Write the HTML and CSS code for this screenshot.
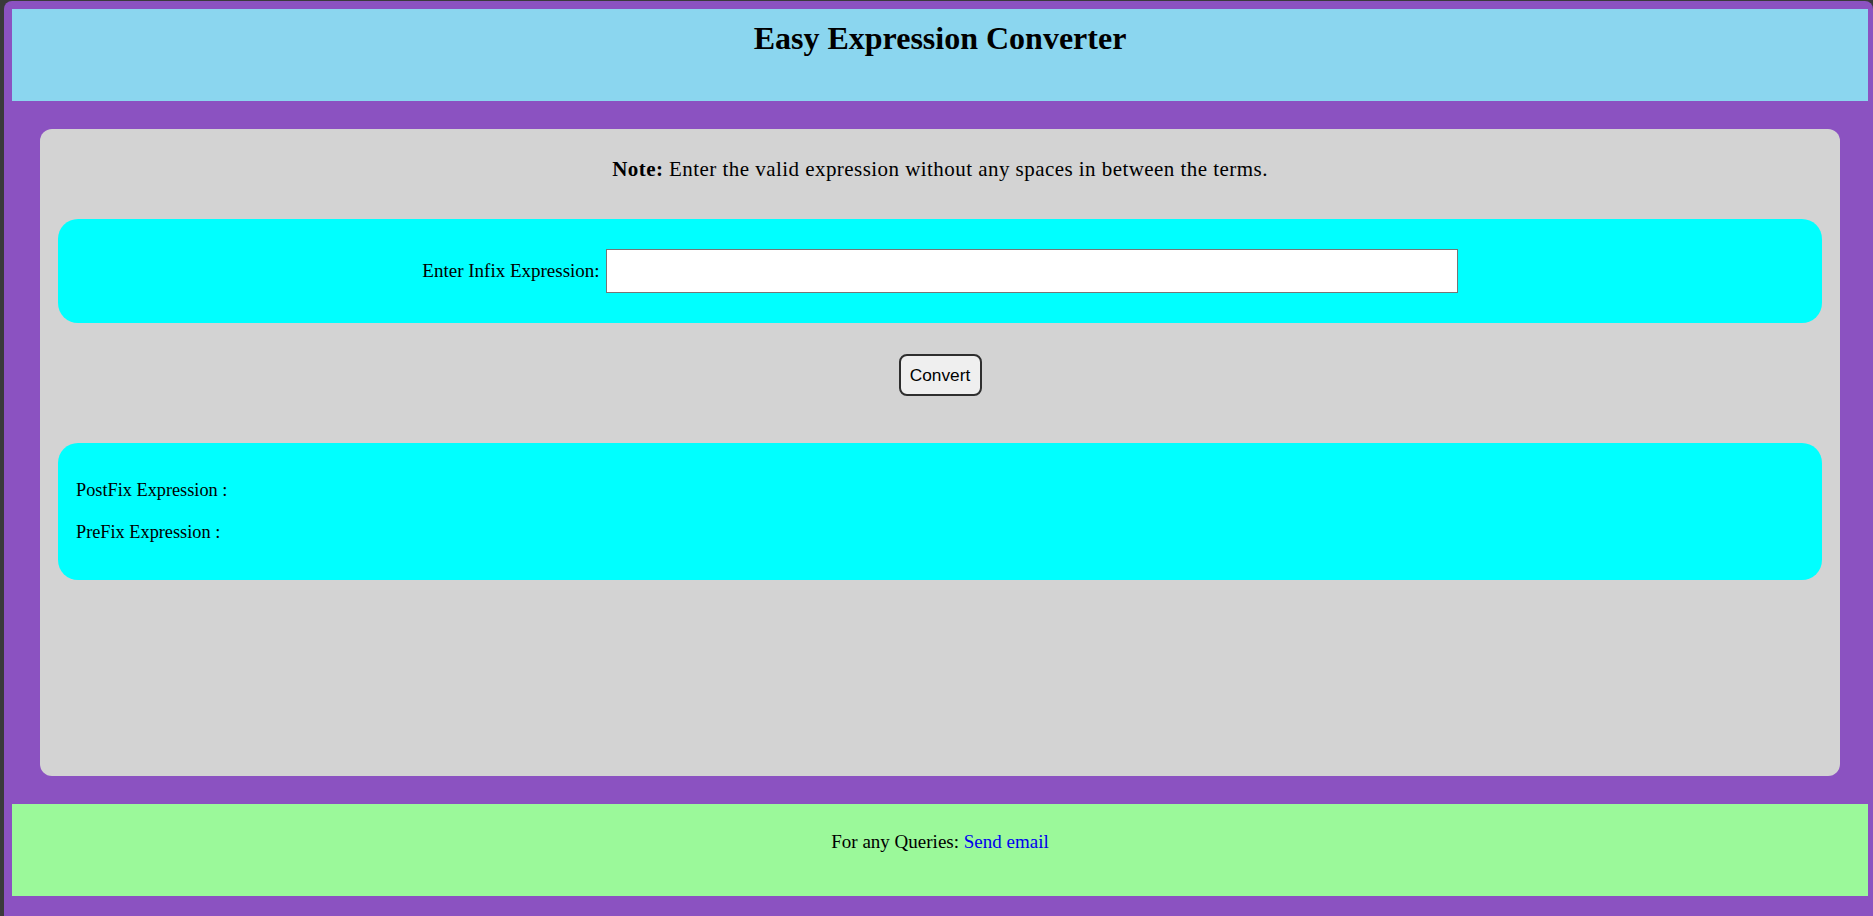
FILE: index.html
```html
<!DOCTYPE html>
<html lang="en">
<head>
<meta charset="utf-8">
<title>Easy Expression Converter</title>
<link rel="stylesheet" href="styles.css">
</head>
<body>
<div class="window">
  <header class="top">
    <h1 class="title">Easy Expression Converter</h1>
  </header>
  <main class="card">
    <p class="note"><b>Note:</b> Enter the valid expression without any spaces in between the terms.</p>
    <div class="input-box">
      <label class="infix-label" for="infix">Enter Infix Expression:</label>
      <input class="infix-input" id="infix" type="text">
    </div>
    <div class="btn-row">
      <button class="convert-btn" type="button">Convert</button>
    </div>
    <div class="result-box">
      <p class="result-line">PostFix Expression :</p>
      <p class="result-line">PreFix Expression :</p>
    </div>
  </main>
  <footer class="foot">For any Queries: <a class="mail-link" href="#">Send email</a></footer>
</div>
</body>
</html>
```
FILE: styles.css
```css
html, body {
  margin: 0;
  padding: 0;
}
body {
  background: #3a3a3b;
  font-family: "Liberation Serif", "Times New Roman", serif;
  color: #000;
  overflow: hidden;
}
.window {
  margin: 1px 0 0 4px;
  height: 915px;
  box-sizing: border-box;
  background: #8b52c1;
  border-radius: 8px 8px 0 0;
  padding: 8px 5px 20px 8px;
}
.top {
  height: 92px;
  box-sizing: border-box;
  background: #8bd6ef;
  padding-top: 11px;
  text-align: center;
}
.title {
  margin: 0;
  font-size: 32px;
  line-height: 37px;
  font-weight: bold;
}
.card {
  display: block;
  margin: 28px;
  height: 647px;
  box-sizing: border-box;
  background: #d3d3d3;
  border-radius: 12px;
  padding: 29px 18px 0;
}
.note {
  margin: 0;
  font-size: 21px;
  line-height: 23px;
  letter-spacing: 0.45px;
  text-align: center;
}
.input-box {
  margin-top: 38px;
  height: 104px;
  background: #00ffff;
  border-radius: 20px;
  display: flex;
  align-items: center;
  justify-content: center;
  gap: 6px;
}
.infix-label {
  font-size: 19px;
  line-height: 22px;
}
.infix-input {
  width: 852px;
  height: 44px;
  box-sizing: border-box;
  margin: 0;
  padding: 0 4px;
  border: 1px solid #767676;
  background: #fff;
  font-size: 16px;
}
.btn-row {
  margin-top: 31px;
  display: flex;
  justify-content: center;
}
.convert-btn {
  width: 83px;
  height: 42px;
  box-sizing: border-box;
  padding: 0;
  border: 2px solid #2e2e2e;
  border-radius: 8px;
  background: #efefef;
  font-family: "Liberation Sans", Arial, sans-serif;
  font-size: 17.3px;
  color: #000;
}
.result-box {
  margin-top: 47px;
  background: #00ffff;
  border-radius: 20px;
  padding: 16px 18px;
  font-size: 18.3px;
  line-height: 21px;
}
.result-line {
  margin: 21px 0;
}
.foot {
  height: 92px;
  box-sizing: border-box;
  background: #9bf99a;
  padding-top: 27px;
  text-align: center;
  font-size: 19px;
  line-height: 22px;
}
.mail-link {
  color: #0000ee;
  text-decoration: none;
}
```
